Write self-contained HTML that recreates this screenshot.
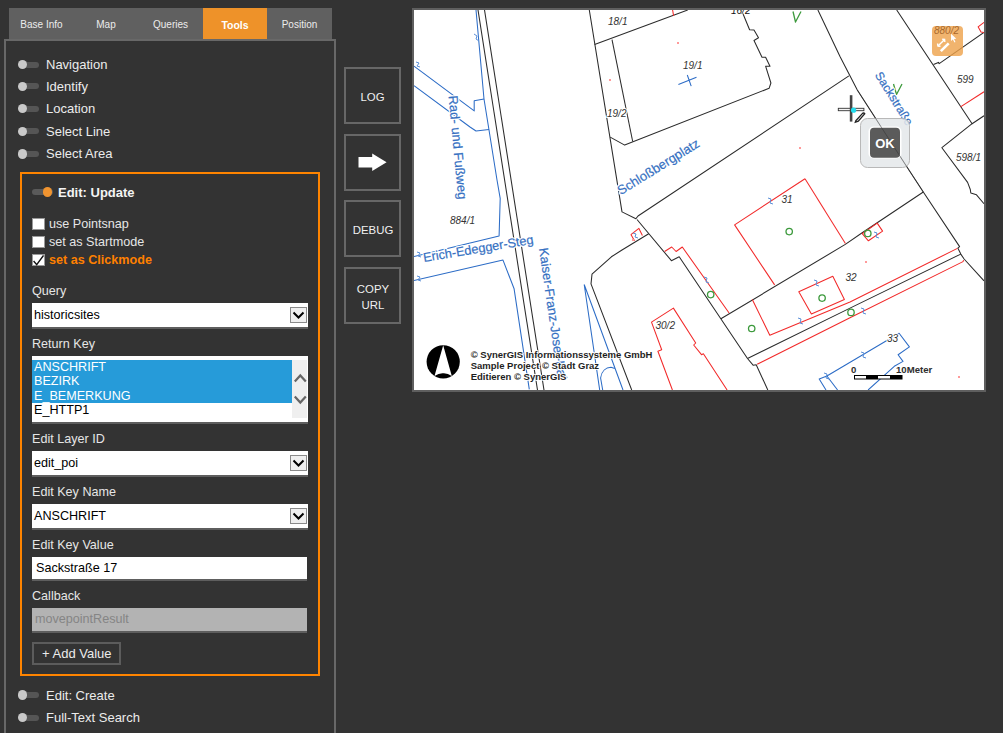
<!DOCTYPE html>
<html><head><meta charset="utf-8">
<style>
*{box-sizing:border-box;margin:0;padding:0}
html,body{width:1003px;height:733px;overflow:hidden;background:#333333;font-family:"Liberation Sans",sans-serif;color:#e6e6e6}
.a{position:absolute}
.tab{position:absolute;top:8px;height:31px;background:#606060;color:#ececec;font-size:10px;text-align:center;line-height:34px}
.tab.on{background:#ee9229;color:#fff;font-weight:bold;font-size:10.5px}
.tg{position:absolute;width:22px;height:10px}
.tg .tr{position:absolute;left:1px;top:2.2px;width:20px;height:6px;border-radius:3px;background:#555}
.tg .kn{position:absolute;left:-0.2px;top:0.4px;width:9.4px;height:9.4px;border-radius:50%;background:#c9c9c9}
.item{position:absolute;left:46px;font-size:13px;color:#ececec;line-height:15px;white-space:nowrap}
.lbl{position:absolute;left:32px;font-size:12.6px;color:#e6e6e6;line-height:15px;white-space:nowrap}
.sel{position:absolute;left:32px;width:276px;height:26px;background:#fff;border-bottom:2px solid #5e5e5e;color:#000;font-size:12.6px;line-height:24px;padding-left:2px;white-space:nowrap}
.dd{position:absolute;right:1px;top:4px;width:17px;height:16px;background:#efefef;border:1px solid #8a8a8a}
.cb{position:absolute;left:32px;width:12.6px;height:12.4px;background:#fff;border:1px solid #999;margin-top:0.5px}
.mb{position:absolute;left:344px;width:57px;height:57px;border:2px solid #676767;color:#f0f0f0;font-size:11.4px;text-align:center}
</style></head><body>
<!-- tabs -->
<div class="tab" style="left:9px;width:65px">Base Info</div>
<div class="tab" style="left:74px;width:64px">Map</div>
<div class="tab" style="left:138px;width:65px">Queries</div>
<div class="tab on" style="left:203px;width:64px">Tools</div>
<div class="tab" style="left:267px;width:65px">Position</div>
<!-- panel -->
<div class="a" style="left:4px;top:39px;width:332px;height:720px;border:2px solid #686868"></div>

<!-- items -->
<div class="tg" style="left:18px;top:59.4px"><div class="tr"></div><div class="kn"></div></div>
<div class="item" style="top:56.9px">Navigation</div>
<div class="tg" style="left:18px;top:81.3px"><div class="tr"></div><div class="kn"></div></div>
<div class="item" style="top:78.8px">Identify</div>
<div class="tg" style="left:18px;top:103.4px"><div class="tr"></div><div class="kn"></div></div>
<div class="item" style="top:100.9px">Location</div>
<div class="tg" style="left:18px;top:126.3px"><div class="tr"></div><div class="kn"></div></div>
<div class="item" style="top:123.8px">Select Line</div>
<div class="tg" style="left:18px;top:148.9px"><div class="tr"></div><div class="kn"></div></div>
<div class="item" style="top:146.4px">Select Area</div>

<!-- orange box -->
<div class="a" style="left:20px;top:172px;width:300px;height:504px;border:2px solid #ff8400"></div>
<div class="tg" style="left:32px;top:187px"><div class="tr" style="background:#5a5a5a;left:0;width:21px"></div><div class="kn" style="left:11px;background:#f09430"></div></div>
<div class="a" style="left:58px;top:185px;font-size:13px;font-weight:bold;color:#f4f4f4;line-height:15px">Edit: Update</div>

<div class="cb" style="top:217px"></div>
<div class="lbl" style="left:49px;top:217px">use Pointsnap</div>
<div class="cb" style="top:235px"></div>
<div class="lbl" style="left:49px;top:235px">set as Startmode</div>
<div class="cb" style="top:253px"><svg width="11" height="11" style="position:absolute;left:0;top:0"><path d="M0.6 6 L3.7 9.6 L10.5 0.5" stroke="#111" stroke-width="1.4" fill="none"/></svg></div>
<div class="lbl" style="left:49px;top:253px;font-weight:bold;color:#ff8000">set as Clickmode</div>

<div class="lbl" style="top:284px">Query</div>
<div class="sel" style="top:303px">historicsites<div class="dd"><svg width="15" height="14" style="position:absolute;left:0;top:0"><path d="M2.5 4.5 L7.5 9.5 L12.5 4.5" stroke="#000" stroke-width="2" fill="none"/></svg></div></div>
<div class="lbl" style="top:337px">Return Key</div>
<div class="a" style="left:32px;top:356px;width:276px;height:68px;background:#fff;border-bottom:2px solid #5e5e5e;overflow:hidden">
<div class="a" style="left:0;top:4px;width:260px;height:43px;background:#269bd9"></div>
<div class="a" style="left:2px;top:4px;font-size:12.6px;line-height:14.4px;color:#fff;white-space:nowrap">ANSCHRIFT<br>BEZIRK<br>E_BEMERKUNG</div>
<div class="a" style="left:2px;top:47px;font-size:12.6px;line-height:14.4px;color:#000;white-space:nowrap">E_HTTP1</div>
<div class="a" style="left:260px;top:4px;width:15px;height:58px;background:#efefef"><svg width="15" height="58" style="position:absolute;left:0;top:0"><path d="M2.8 21.5 L8.3 15.5 L13.8 21.5" stroke="#666" stroke-width="2.2" fill="none"/><path d="M2.8 36.5 L8.3 42.5 L13.8 36.5" stroke="#666" stroke-width="2.2" fill="none"/></svg></div>
</div>
<div class="lbl" style="top:432px">Edit Layer ID</div>
<div class="sel" style="top:451px">edit_poi<div class="dd"><svg width="15" height="14" style="position:absolute;left:0;top:0"><path d="M2.5 4.5 L7.5 9.5 L12.5 4.5" stroke="#000" stroke-width="2" fill="none"/></svg></div></div>
<div class="lbl" style="top:485px">Edit Key Name</div>
<div class="sel" style="top:504px">ANSCHRIFT<div class="dd"><svg width="15" height="14" style="position:absolute;left:0;top:0"><path d="M2.5 4.5 L7.5 9.5 L12.5 4.5" stroke="#000" stroke-width="2" fill="none"/></svg></div></div>
<div class="lbl" style="top:538px">Edit Key Value</div>
<div class="a" style="left:32px;top:557px;width:275px;height:24px;background:#fff;border-bottom:2px solid #5e5e5e;color:#000;font-size:12.6px;line-height:22px;padding-left:4px">Sackstraße 17</div>
<div class="lbl" style="top:589px">Callback</div>
<div class="a" style="left:32px;top:608px;width:275px;height:25px;background:#b3b3b3;border-bottom:2px solid #5e5e5e;color:#858585;font-size:12.6px;line-height:23px;padding-left:3px">movepointResult</div>
<div class="a" style="left:32px;top:642px;width:89px;height:23px;border:2px solid #5c5c5c;color:#ececec;font-size:13px;line-height:20px;padding-left:8px;white-space:nowrap">+ Add Value</div>

<div class="tg" style="left:18px;top:690.0px"><div class="tr"></div><div class="kn"></div></div>
<div class="item" style="top:687.5px">Edit: Create</div>
<div class="tg" style="left:18px;top:712.4px"><div class="tr"></div><div class="kn"></div></div>
<div class="item" style="top:709.9px">Full-Text Search</div>

<!-- middle buttons -->
<div class="mb" style="top:67px;line-height:56px">LOG</div>
<div class="mb" style="top:134px"><svg width="53" height="53" style="position:absolute;left:0;top:0"><path d="M12.5 21 H26.2 V17.5 L40.6 26.2 L26.2 35 V31.4 H12.5 Z" fill="#fff"/></svg></div>
<div class="mb" style="top:200px;line-height:56px;padding-left:1px">DEBUG</div>
<div class="mb" style="top:267px;line-height:16.5px;padding-top:11.5px;padding-left:1px">COPY<br>URL</div>

<!-- map -->
<div class="a" style="left:412px;top:8px;width:574px;height:384px;border:2px solid #5f5f5f;background:#fff;overflow:hidden"></div>
<svg class="a" style="left:414px;top:10px" width="570" height="380" viewBox="414 10 570 380">
<g fill="none" stroke-linejoin="round">
<!-- black parcel lines -->
<g stroke="#2b2b2b" stroke-width="1.05">
<path d="M478 10 L537.5 390"/>
<path d="M484.5 10 L544 390"/>
<path d="M589.3 10 L622 211.9 L635.9 218.7 L638 216 L848.9 75.9"/>
<path d="M637 219.5 L671.4 260.7 L679.2 256.8 L747.5 358.5 L753.3 365.3 L756.2 364.7 L767.8 390"/>
<path d="M594.6 44.4 L687.7 10"/>
<path d="M612 39.6 L632.7 141.5"/>
<path d="M610.2 137.1 L624.7 145.1 L769.1 88.3 L770.9 83 L765.6 66.2 L770 66.2 L765.6 57.3 L762 57.3 L754 40.5 L758.5 37.8 L754 30 L749.6 29.8 L743.4 14.8 L741 10"/>
<path d="M817.9 10 L840 56.4 L857.3 90 L906.5 166.3 L923.3 192 L959.6 246.6 L957.8 248.1 L960.8 254.1 L964.1 259 L984 280.8"/>
<path d="M648.7 233.7 L622 250 L611.4 256.8 L592 274.2 L591 283.9 L631.7 390"/>
<path d="M720.9 318.8 L845.3 244.4 L862.2 232.8 L923.3 192"/>
<path d="M747.5 358.5 L850 308.1 L960.8 254.1"/>
<path d="M896.7 10 L972.1 123.7 L984 115.8"/>
<path d="M972.1 123.7 L941.9 147.7 L967.6 182.4 L970.3 189.5 L970.8 193 L976.5 194.8 L984 203.7"/>
<path d="M933.5 64.5 L938.4 62.4 L939.2 63.6 L983.9 32.5"/>
</g>
<!-- red lines -->
<g stroke="#f22a2a" stroke-width="1.05">
<path d="M672.6 10 L673.6 15.8"/>
<path d="M805 178.8 L734.6 224.9 L774.6 284.9"/>
<path d="M805 178.8 L845.4 243.5"/>
<path d="M630.9 234.6 L638.9 228.4 L642.4 235.5"/>
<path d="M630.9 234.6 L634.5 240.8"/>
<path d="M664.6 251.5 L671.7 247 L676.1 251.5 L682.3 247 L729.1 313"/>
<path d="M752.3 299.4 L769.8 335.3 L850 302 L957.4 248.4"/>
<path d="M757.2 364.3 L850 317.8 L963 261.6 L963.6 260.1"/>
<path d="M798.8 291.7 L832.8 276.2 L844.4 299.4 L811.4 314 Z"/>
<path d="M672.4 390 L657.9 351.2 L661.7 349.8 L651.5 322.1 L673.4 308.1 L695.7 343 L693.7 345 L701.5 354.7 L703.4 353.7 L727.1 390"/>
<path d="M862.2 233.7 L877.2 223.1 L882.6 231.1 L868.4 240.8 Z"/>
<path d="M960.5 106.9 L984 91.8"/>
<path d="M984 22.3 L978.1 26.8 L981 32.1 L984 32.5"/>
</g>
<!-- blue lines -->
<g stroke="#2c6cc6" stroke-width="1.05">
<path d="M476 10 L484 99 L489 130 L497 180 L500.2 198.4 L499.1 236 L414 256.6"/>
<path d="M414 66.2 L474.2 110.9 L474.2 100.7 L484.1 99"/>
<path d="M414 85.7 L470 127 L476 131 L489 129.6"/>
<path d="M414 280.5 L503 260.1 L514.1 288.8 L529.3 389.4"/>
<path d="M584.2 284.5 L599.7 390 M584.2 284.5 L623 390"/>
<path d="M602.7 390 L600.6 378 C601.5 371 606 367.5 611 367.3 L614.8 368.4"/>
<path d="M678.4 84.4 L696.5 77.3 M687.3 75 L691.2 86.2"/>
<path d="M826 390 L819.2 378.9 L826.9 376 L899.1 333.3 L909.4 346.9 L898.1 354.7 L903 361.4 L894.3 366.3 L868.1 390"/>
<path d="M826.9 376 L837.6 390"/>
</g>
<!-- small blue ticks -->
<g stroke="#5a8fd8" stroke-width="1">
<path d="M474 34 l3 2 l-1 3 l3 2"/>
<path d="M416 62 l3 1 l-2 3 l3 1"/>
<path d="M417 252 l3 1 l-2 3 l3 1"/>
<path d="M417 276 l3 1 l-2 3 l3 1"/>
<path d="M768 198 l3 1 l-1 4 l3 1"/>
<path d="M704 277 l3 1 l-1 4 l3 1"/>
<path d="M814 280 l3 1 l-1 4 l3 1"/>
<path d="M798 318 l3 1 l-1 4 l3 1"/>
<path d="M861 308 l3 1 l-1 4 l3 1"/>
<path d="M874 232 l3 1 l-1 4 l3 1"/>
<path d="M633 233 l3 1 l-1 3 l3 1"/>
<path d="M861 352 l3 1 l-1 4 l3 1"/>
<path d="M824 373 l3 1 l-1 4 l3 1"/>
</g>
<!-- green -->
<g stroke="#3d9a3d" stroke-width="1.3">
<circle cx="789.2" cy="231.6" r="3.2"/>
<circle cx="867.8" cy="233.4" r="3.2"/>
<circle cx="710.7" cy="294.6" r="3.2"/>
<circle cx="751.7" cy="328.5" r="3.2"/>
<circle cx="822.1" cy="298.1" r="3.2"/>
<circle cx="851" cy="312.4" r="3.2"/>
<path d="M793 11.5 L795.5 22 L801 11.5"/>
<path d="M893.5 84 L896.5 94.5 L902 84"/>
</g>
<!-- pink dots -->
<g fill="#ff9a9a">
<rect x="677" y="42" width="2" height="2"/>
<rect x="609" y="79" width="2" height="2"/>
<rect x="799" y="147" width="2" height="2"/>
<rect x="865" y="261" width="2" height="2"/>
<rect x="958" y="376" width="2" height="2"/>
<rect x="632" y="239" width="2" height="2"/>
</g>
</g>
<!-- parcel labels -->
<g font-family="Liberation Sans" font-style="italic" font-size="10" fill="#333" stroke="#fff" stroke-width="2" paint-order="stroke">
<text x="608" y="25">18/1</text>
<text x="683" y="69">19/1</text>
<text x="607" y="116.5">19/2</text>
<text x="731" y="14" fill="#111" stroke-width="1">16/2</text>
<text x="450" y="223.5">884/1</text>
<text x="781.5" y="203">31</text>
<text x="957" y="83">599</text>
<text x="956" y="160.5">598/1</text>
<text x="655.5" y="328.5">30/2</text>
<text x="845.5" y="281">32</text>
<text x="887" y="342">33</text>
</g>
<!-- street names -->
<g font-family="Liberation Sans" font-size="13" fill="#3570c2" stroke="#fff" stroke-width="2.6" stroke-linejoin="round">
<text transform="translate(448.5 96) rotate(84.6)">Rad- und Fußweg</text>
<text transform="translate(424 262) rotate(-9.5)" font-size="12.7">Erich-Edegger-Steg</text>
<text transform="translate(539 248.5) rotate(81.8)">Kaiser-Franz-Josef-Kai</text>
<text transform="translate(620.8 195.3) rotate(-31.8)">Schloßbergplatz</text>
<text transform="translate(874.5 75) rotate(58)" font-size="12">Sackstraße</text>
</g>
<g font-family="Liberation Sans" font-size="13" fill="#3570c2" stroke="#3570c2" stroke-width="0.2">
<text transform="translate(448.5 96) rotate(84.6)">Rad- und Fußweg</text>
<text transform="translate(424 262) rotate(-9.5)" font-size="12.7">Erich-Edegger-Steg</text>
<text transform="translate(539 248.5) rotate(81.8)">Kaiser-Franz-Josef-Kai</text>
<text transform="translate(620.8 195.3) rotate(-31.8)">Schloßbergplatz</text>
<text transform="translate(874.5 75) rotate(58)" font-size="12">Sackstraße</text>
</g>
<!-- compass -->
<circle cx="443.2" cy="361.8" r="16.6" fill="#000"/>
<path d="M443.2 345.3 L434.5 376 Q439 373 443.2 373.3 Q447.5 373 451.8 376 Z" fill="#fff"/>
<!-- copyright -->
<g font-family="Liberation Sans" font-weight="bold" font-size="9.5" fill="#1e1e1e" stroke="#fff" stroke-width="1.6" paint-order="stroke">
<text x="470.7" y="358.3">© SynerGIS Informationssysteme GmbH</text>
<text x="470.7" y="369">Sample Project © Stadt Graz</text>
<text x="470.7" y="379.5">Editieren © SynerGIS</text>
</g>
<!-- scale bar -->
<g font-family="Liberation Sans" font-weight="bold" font-size="9.6" fill="#2e2e2e" stroke="#fff" stroke-width="2" paint-order="stroke">
<text x="851" y="373">0</text>
<text x="896" y="373">10Meter</text>
</g>
<rect x="854.5" y="375.5" width="47.5" height="3.5" fill="#fff" stroke="#000" stroke-width="1"/>
<rect x="866" y="375.5" width="12" height="3.5" fill="#000"/>
<rect x="890" y="375.5" width="12" height="3.5" fill="#000"/>
<!-- orange tool icon -->
<rect x="932" y="26" width="31" height="30" rx="4" fill="#eda14a" fill-opacity="0.8"/>
<text x="934" y="33.8" font-family="Liberation Sans" font-style="italic" font-size="10" fill="#9a5a20" fill-opacity="0.85">880/2</text>
<g stroke="#fff" fill="none" stroke-width="1.4">
<path d="M938 46 L944.6 39.5"/>
<path d="M937.5 43.5 L938 46 L940.5 46.2 M942.2 39.3 L944.6 39.5 L944.8 42"/>
</g>
<path d="M940.8 51.2 L948.7 43.3" stroke="#fff" stroke-width="2.6"/>
<path d="M951 33.8 L951 41 L952.8 39.5 L954.5 42.5 L955.5 42 L954 39 L956.3 38.8 Z" fill="#fff"/>
<!-- OK button -->
<rect x="860.5" y="118.5" width="49" height="49" rx="7" fill="#e4e7ea" fill-opacity="0.85" stroke="#b8b8b8" stroke-width="1"/>
<rect x="868.5" y="126.5" width="33" height="32" rx="5" fill="#fff"/>
<rect x="870" y="127.8" width="30" height="30" rx="4" fill="#5b5b5b"/>

<path d="M857.3 90 L906.5 166.3 L923.3 192" stroke="#2b2b2b" stroke-width="1" opacity="0.45" fill="none"/>
<text x="885" y="148" text-anchor="middle" font-family="Liberation Sans" font-weight="bold" font-size="13" fill="#fff">OK</text>
<!-- crosshair cursor -->
<rect x="838.3" y="108.3" width="25.6" height="2.4" fill="#f4f4f4" stroke="#333" stroke-width="0.9"/>
<rect x="849.8" y="95.2" width="2.6" height="26.4" fill="#444"/>
<circle cx="853.6" cy="110.2" r="2.6" fill="#22ddee"/>
<path d="M855.8 120.8 L862.3 113.6 Q863.8 112.3 864.8 113.8 L858.3 121.2 L855.3 122.3 Z" fill="#f2f2f2" stroke="#222" stroke-width="1.3"/>
</svg>

</body></html>
